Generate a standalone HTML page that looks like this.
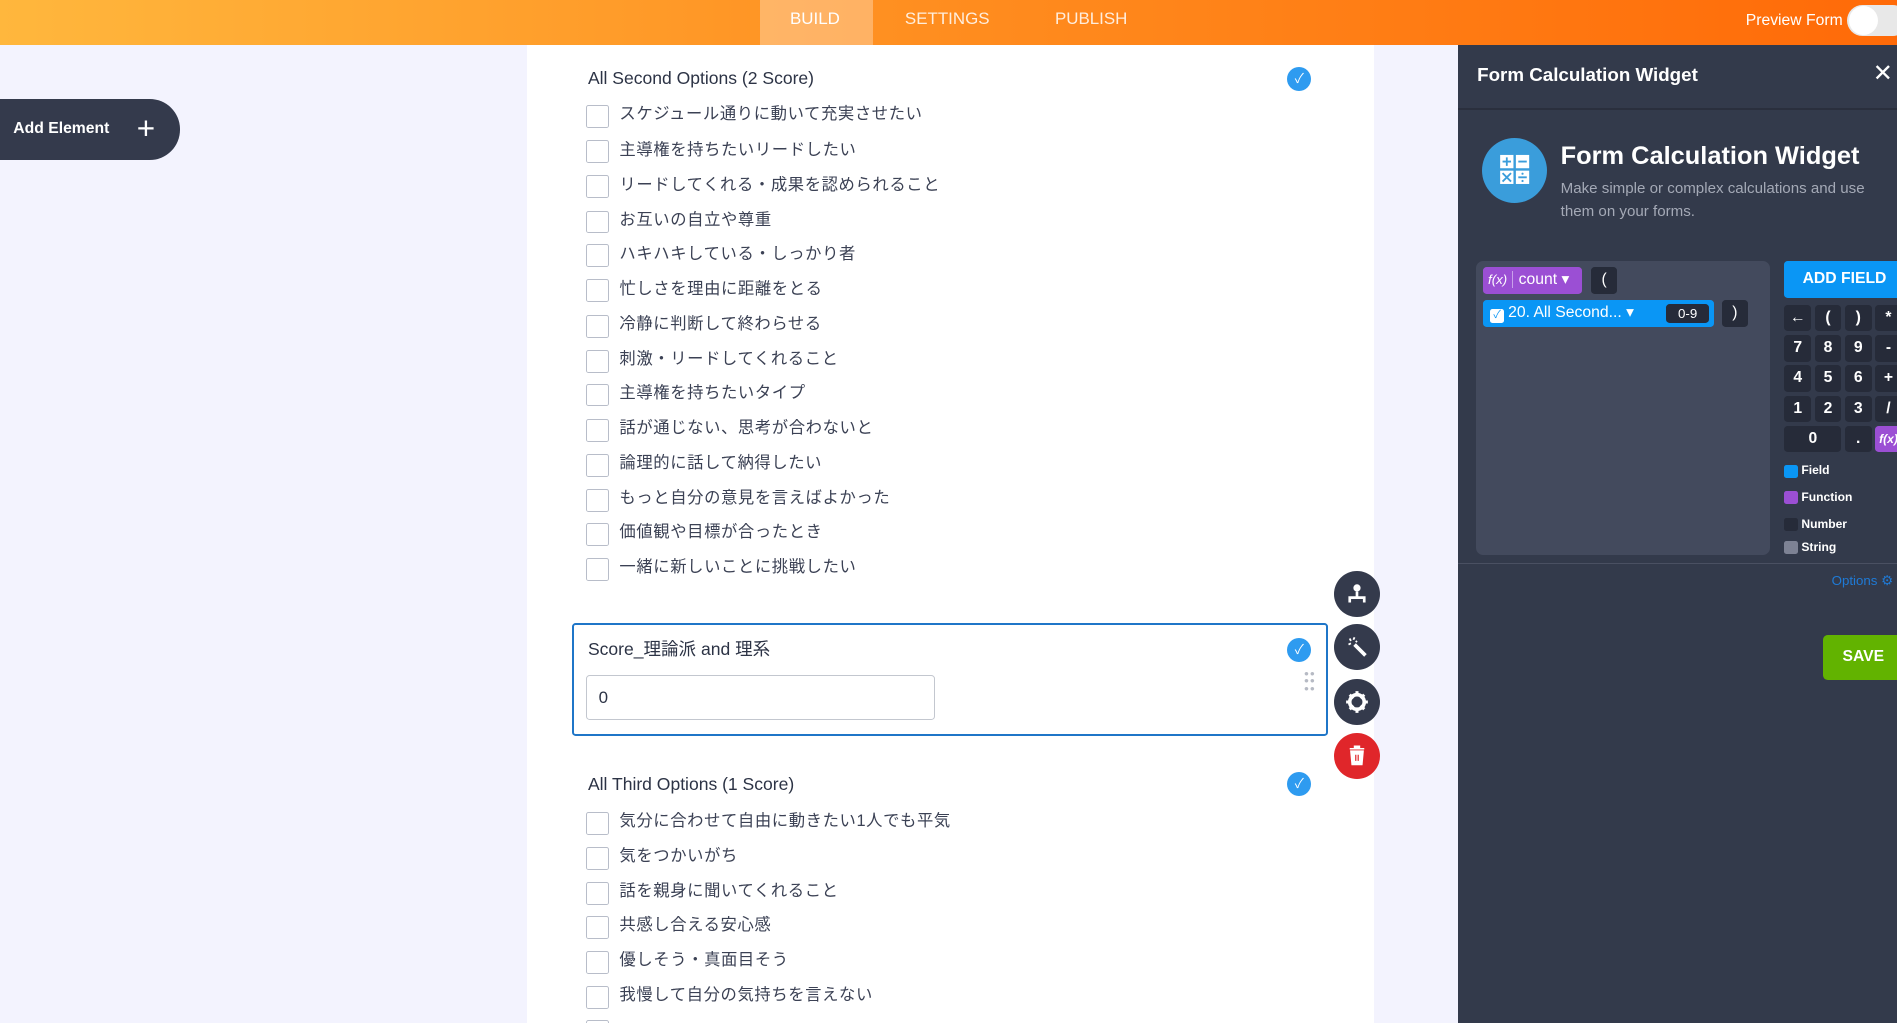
<!DOCTYPE html>
<html><head><meta charset="utf-8"><style>
*{box-sizing:border-box;margin:0;padding:0}
html,body{width:1897px;height:1023px;overflow:hidden;background:#f3f3fe}
#w{zoom:1.2098;width:1568px;height:846px;position:relative;font-family:"Liberation Sans","Noto Sans CJK JP",sans-serif;overflow:hidden}
.top{position:absolute;left:0;top:0;width:1568px;height:37px;background:linear-gradient(90deg,#ffb73d,#ff8d1f 50%,#ff6a08)}
.tab{position:absolute;top:0;height:37px;line-height:32px;color:#fff;font-size:14px;opacity:.85}
.abs{position:absolute}
.form{position:absolute;left:436px;top:37px;width:700px;height:809px;background:#fff}
.q{position:absolute;left:486px;font-size:14.5px;color:#2c3345}
.cb{position:absolute;left:484px;width:19px;height:19px;border:1px solid #b8bdc9;border-radius:2px;background:#fff}
.ct{position:absolute;left:512px;font-size:13.5px;color:#3b4154;letter-spacing:.5px;margin-top:-3px}
.chk{position:absolute;left:1064px;width:20px;height:20px;border-radius:50%;background:#2e9bf0;color:#fff;font-size:11px;text-align:center;line-height:20px}
.rb{position:absolute;left:1103px;width:38px;height:38px;border-radius:50%;background:#343a4c}
.panel{position:absolute;left:1205px;top:37px;width:363px;height:809px;background:#333a4b;color:#fff}
.k{position:absolute;width:22px;height:22px;background:#262b39;border-radius:3px;color:#fff;font-size:13px;font-weight:bold;text-align:center;line-height:22px}
.lg{position:absolute;left:270px;font-size:10px;font-weight:bold}
.lg i{position:absolute;left:0;top:1px;width:11px;height:11px;border-radius:2px}
.lg span{position:absolute;left:14px;white-space:nowrap}
</style></head><body><div id="w">
<div class="top">
<div class="abs" style="left:628px;top:0;width:94px;height:37px;background:rgba(255,255,255,.3)"></div>
<div class="tab" style="left:653px;opacity:1">BUILD</div>
<div class="tab" style="left:748px">SETTINGS</div>
<div class="tab" style="left:872px">PUBLISH</div>
<div class="tab" style="left:1443px;font-size:13px;line-height:34px;opacity:1">Preview Form</div>
<div class="abs" style="left:1527px;top:4px;width:50px;height:26px;border-radius:13px;background:#e8e8e8"></div>
<div class="abs" style="left:1528px;top:5px;width:24px;height:24px;border-radius:50%;background:#fff"></div>
</div>
<div class="abs" style="left:0;top:82px;width:149px;height:50px;background:#343a4c;border-radius:0 25px 25px 0;color:#fff;font-size:13px;font-weight:bold;line-height:50px;padding-left:11px">Add Element<span style="position:absolute;left:113px;top:0;font-size:26px;font-weight:normal">+</span></div>
<div class="form"></div>
<div class="q" style="top:56px">All Second Options (2 Score)</div>
<div class="chk" style="top:55px">✓</div>
<div class="cb" style="top:87px"></div><div class="ct" style="top:86px">スケジュール通りに動いて充実させたい</div>
<div class="cb" style="top:116px"></div><div class="ct" style="top:115px">主導権を持ちたいリードしたい</div>
<div class="cb" style="top:145px"></div><div class="ct" style="top:144px">リードしてくれる・成果を認められること</div>
<div class="cb" style="top:174px"></div><div class="ct" style="top:173px">お互いの自立や尊重</div>
<div class="cb" style="top:202px"></div><div class="ct" style="top:201px">ハキハキしている・しっかり者</div>
<div class="cb" style="top:231px"></div><div class="ct" style="top:230px">忙しさを理由に距離をとる</div>
<div class="cb" style="top:260px"></div><div class="ct" style="top:259px">冷静に判断して終わらせる</div>
<div class="cb" style="top:289px"></div><div class="ct" style="top:288px">刺激・リードしてくれること</div>
<div class="cb" style="top:317px"></div><div class="ct" style="top:316px">主導権を持ちたいタイプ</div>
<div class="cb" style="top:346px"></div><div class="ct" style="top:345px">話が通じない、思考が合わないと</div>
<div class="cb" style="top:375px"></div><div class="ct" style="top:374px">論理的に話して納得したい</div>
<div class="cb" style="top:404px"></div><div class="ct" style="top:403px">もっと自分の意見を言えばよかった</div>
<div class="cb" style="top:432px"></div><div class="ct" style="top:431px">価値観や目標が合ったとき</div>
<div class="cb" style="top:461px"></div><div class="ct" style="top:460px">一緒に新しいことに挑戦したい</div>
<div class="abs" style="left:473px;top:515px;width:625px;height:93px;border:2px solid #1f76c8;border-radius:3px"></div>
<div class="q" style="top:526px">Score_理論派 and 理系</div>
<div class="chk" style="top:527px">✓</div>
<div class="abs" style="left:484px;top:558px;width:289px;height:37px;border:1px solid #c3c7cf;border-radius:3px;font-size:14px;color:#2c3345;padding:10px 10px">0</div>
<div class="abs" style="left:1078px;top:554px;color:#b6bac4;font-size:11px;line-height:6px;letter-spacing:1px">••<br>••<br>••</div>
<div class="q" style="top:640px">All Third Options (1 Score)</div>
<div class="chk" style="top:638px">✓</div>
<div class="cb" style="top:671px"></div><div class="ct" style="top:670px">気分に合わせて自由に動きたい1人でも平気</div>
<div class="cb" style="top:700px"></div><div class="ct" style="top:699px">気をつかいがち</div>
<div class="cb" style="top:729px"></div><div class="ct" style="top:728px">話を親身に聞いてくれること</div>
<div class="cb" style="top:757px"></div><div class="ct" style="top:756px">共感し合える安心感</div>
<div class="cb" style="top:786px"></div><div class="ct" style="top:785px">優しそう・真面目そう</div>
<div class="cb" style="top:815px"></div><div class="ct" style="top:814px">我慢して自分の気持ちを言えない</div>
<div class="cb" style="top:843px"></div>
<div class="rb" style="top:472px"><svg width="38" height="38"><circle cx="19" cy="14" r="3" fill="#fff"/><path d="M13 26v-4h12v4M19 17v5" stroke="#fff" stroke-width="2.2" fill="none"/></svg></div>
<div class="rb" style="top:516px"><svg width="38" height="38"><path d="M17 17l9 9" stroke="#fff" stroke-width="3"/><path d="M13 12l1 2M12 17l2-1M17 11l-1 2M19 14l-1 1" stroke="#fff" stroke-width="1.5"/></svg></div>
<div class="rb" style="top:561px"><svg width="38" height="38"><circle cx="19" cy="19" r="6" fill="none" stroke="#fff" stroke-width="3"/><path d="M19 10v4M19 24v4M10 19h4M24 19h4M13 13l3 3M22 22l3 3M25 13l-3 3M13 25l3-3" stroke="#fff" stroke-width="2.5"/></svg></div>
<div class="rb" style="top:606px;background:#e0262a"><svg width="38" height="38"><path d="M13 13h12M17 13v-2h4v2M14 15h10l-1 11h-8z" fill="#fff" stroke="#fff" stroke-width="1.3"/><path d="M18 18v5M20 18v5" stroke="#e0262a" stroke-width="1"/></svg></div>
<div class="panel">
<div class="abs" style="left:16px;top:16px;font-size:15.5px;font-weight:bold">Form Calculation Widget</div>
<div class="abs" style="left:343px;top:12px;font-size:20px">✕</div>
<div class="abs" style="left:0;top:52px;width:363px;height:2px;background:#2a2f3d"></div>
<div class="abs" style="left:20px;top:77px;width:54px;height:54px;border-radius:50%;background:#3a9ddb"><svg width="54" height="54"><rect x="15" y="14" width="11" height="11" fill="#fff"/><rect x="28" y="14" width="11" height="11" fill="#fff"/><rect x="15" y="27" width="11" height="11" fill="#fff"/><rect x="28" y="27" width="11" height="11" fill="#fff"/><path d="M17 19.5h7M20.5 16v7M30 19.5h7M17 29l7 7M24 29l-7 7M30 32.5h7" stroke="#3a9ddb" stroke-width="1.5"/><circle cx="33.5" cy="29.5" r=".9" fill="#3a9ddb"/><circle cx="33.5" cy="35.5" r=".9" fill="#3a9ddb"/></svg></div>
<div class="abs" style="left:85px;top:80px;font-size:21px;font-weight:bold">Form Calculation Widget</div>
<div class="abs" style="left:85px;top:110px;font-size:12.5px;color:#a4a9b6;line-height:19px;width:280px">Make simple or complex calculations and use them on your forms.</div>
<div class="abs" style="left:15px;top:179px;width:243px;height:243px;background:#434a5d;border-radius:6px"></div>
<div class="abs" style="left:21px;top:184px;width:82px;height:22px;background:#9b4fd4;border-radius:3px;font-size:13px;line-height:22px;padding-left:4px"><i style="font-size:11px">f(x)</i> <span style="border-left:1px solid #c9a0ea;padding-left:5px">count ▾</span></div>
<div class="abs" style="left:110px;top:184px;width:22px;height:22px;background:#262b39;border-radius:3px;text-align:center;line-height:22px;font-size:13px">(</div>
<div class="abs" style="left:21px;top:211px;width:191px;height:22px;background:#0a96f5;border-radius:3px;font-size:13px;line-height:22px;padding-left:6px"><span style="display:inline-block;width:11px;height:11px;background:#fff;border-radius:2px;color:#0a96f5;font-size:9px;line-height:11px;text-align:center;vertical-align:-1px">✓</span> 20. All Second... ▾<span class="abs" style="left:151px;top:3px;width:36px;height:16px;background:#262b39;border-radius:3px;font-size:11px;line-height:16px;text-align:center">0-9</span></div>
<div class="abs" style="left:218px;top:211px;width:22px;height:22px;background:#262b39;border-radius:3px;text-align:center;line-height:22px;font-size:13px">)</div>
<div class="abs" style="left:270px;top:179px;width:100px;height:30px;background:#0a96f5;border-radius:3px;font-size:13px;font-weight:bold;line-height:30px;padding-left:15px">ADD FIELD</div>
<div class="k" style="left:270px;top:215px">←</div><div class="k" style="left:295px;top:215px">(</div><div class="k" style="left:320px;top:215px">)</div><div class="k" style="left:345px;top:215px">*</div>
<div class="k" style="left:270px;top:240px">7</div><div class="k" style="left:295px;top:240px">8</div><div class="k" style="left:320px;top:240px">9</div><div class="k" style="left:345px;top:240px">-</div>
<div class="k" style="left:270px;top:265px">4</div><div class="k" style="left:295px;top:265px">5</div><div class="k" style="left:320px;top:265px">6</div><div class="k" style="left:345px;top:265px">+</div>
<div class="k" style="left:270px;top:290px">1</div><div class="k" style="left:295px;top:290px">2</div><div class="k" style="left:320px;top:290px">3</div><div class="k" style="left:345px;top:290px">/</div>
<div class="k" style="left:270px;top:315px;width:47px">0</div><div class="k" style="left:320px;top:315px">.</div><div class="k" style="left:345px;top:315px;background:#9b4fd4;font-size:10px;font-style:italic">f(x)</div>
<div class="lg" style="top:346px"><i style="background:#0a96f5"></i><span>Field</span></div>
<div class="lg" style="top:368px"><i style="background:#9b4fd4"></i><span>Function</span></div>
<div class="lg" style="top:390px"><i style="background:#262b39"></i><span>Number</span></div>
<div class="lg" style="top:409px"><i style="background:#7d8294"></i><span>String</span></div>
<div class="abs" style="left:0;top:428px;width:363px;height:1px;background:#4a5062"></div>
<div class="abs" style="left:309px;top:437px;font-size:11px;color:#1f7ad6;white-space:nowrap">Options ⚙</div>
<div class="abs" style="left:302px;top:488px;width:70px;height:37px;background:#62b300;border-radius:4px;font-size:13px;font-weight:bold;line-height:37px;padding-left:16px">SAVE</div>
</div>
</div></body></html>
